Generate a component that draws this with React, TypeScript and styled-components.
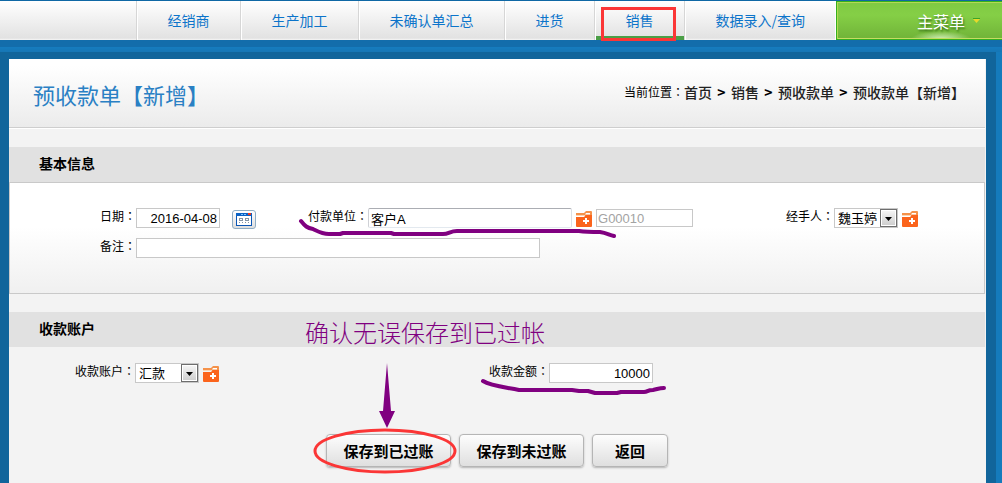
import React from "react";
import styled, { createGlobalStyle, css } from "styled-components";

const cjk = `"Noto Sans CJK SC", sans-serif`;

const GlobalStyle = createGlobalStyle`
  * { box-sizing: border-box; }
  body {
    margin: 0;
    background: #157bbc;
    color: #000;
    font-family: ${cjk};
    font-size: 12px;
  }
`;

const Page = styled.div`
  display: flex;
  flex-direction: column;
  min-height: 100vh;
`;

const TopBar = styled.nav`
  display: flex;
  height: 40px;
  border-top: 1px solid #0f68a5;
  background: linear-gradient(#ffffff, #e2e2e2 95%, #f6f6f6);
`;

const TopSpacer = styled.div`
  flex: 1;
  border-right: 1px solid #d6d6d6;
`;

const NavItem = styled.a<{ $active?: boolean; $last?: boolean }>`
  position: relative;
  padding: 0 30px;
  border-left: 1px solid #fff;
  border-right: ${(p) => (p.$last ? "1px solid #fff" : "1px solid #d6d6d6")};
  line-height: 38px;
  font-size: 14px;
  color: #0c74ca;
  text-decoration: none;
  white-space: nowrap;
  box-shadow: ${(p) => (p.$active ? "inset 0 -4px #4b9f47" : "none")};
`;

const RedFrame = styled.span`
  position: absolute;
  top: 6px;
  left: 5px;
  width: 75px;
  height: 34px;
  border: 3px solid #fb3636;
`;

const MainMenu = styled.button`
  display: flex;
  align-items: center;
  justify-content: center;
  gap: 8px;
  width: 166px;
  padding: 0 0 0 58px;
  border: 1px solid #35b01e;
  border-right: 0;
  box-shadow: inset 1px 1px #b5d953, inset 0 -1px #c6dc62;
  background:
    radial-gradient(ellipse 30px 8px at 104px 100%, #d3efb9, transparent),
    linear-gradient(#7fc943, #85cf46 35%, #70b338);
  color: #fff;
  font-family: ${cjk};
  font-size: 16px;
  text-shadow: 1px 2px 2px #3c761d;
`;

const Stripe = styled.div`
  height: 12px;
  background: linear-gradient(#136dab 7px, #167dbf 7px, #1676b5);
`;

const Frame = styled.div`
  display: flex;
  flex: 1;
  margin-right: 6px;
  padding: 7px 10px 0 9px;
  background: #11659b;
`;

const Panel = styled.main`
  flex: 1;
  min-width: 0;
  padding-right: 1px;
  background: #f3f3f3;
`;

const PanelHeader = styled.header`
  display: flex;
  align-items: center;
  justify-content: space-between;
  height: 69px;
  margin-bottom: 19px;
  padding: 0 20px 0 24px;
  border-bottom: 1px solid #cecece;
  box-shadow: 0 1px #fff;
  background: linear-gradient(#ffffff 10%, #ebebeb);
`;

const Title = styled.h1`
  margin: 0;
  padding-top: 2px;
  font-size: 22px;
  line-height: 32px;
  font-weight: 400;
  color: #2a80c4;
`;

const Crumbs = styled.div`
  display: flex;
  align-items: center;
  padding-bottom: 2px;
  font-size: 12px;
  line-height: 20px;
`;

const Crumb = styled.a`
  font-size: 14px;
  font-weight: 500;
  color: #222;
  text-decoration: none;
`;

const CrumbMark = styled.span`
  width: 19px;
  text-align: center;
  font-size: 14px;
  font-weight: 700;
`;

const Section = styled.section`
  margin-top: 18px;
`;

const SectionTitle = styled.h2`
  margin: 0;
  padding: 0 0 2px 30px;
  background: #e1e1e1;
  font-size: 14px;
  line-height: 33px;
  font-weight: 700;
`;

const FormBox = styled.div`
  display: flex;
  flex-direction: column;
  gap: 10px;
  padding: 25px 62px 35px 0;
  border: 1px solid #c9c9c9;
  background: linear-gradient(#ffffff 40%, #f0f0f0);
`;

const Row = styled.div<{ $columns?: string }>`
  display: grid;
  grid-template-columns: ${(p) => p.$columns ?? "1fr"};
`;

const AccountRow = styled(Row)`
  padding-top: 16px;
`;

const Field = styled.div`
  position: relative;
  display: flex;
  align-items: center;
  height: 20px;
`;

const Label = styled.label<{ $lead?: boolean }>`
  align-self: flex-start;
  width: ${(p) => (p.$lead ? "126px" : "auto")};
  text-align: right;
  line-height: 16px;
  white-space: nowrap;
`;

const Colon = styled.span`
  font-family: "Noto Sans CJK TC", sans-serif;
`;

const TextInput = styled.input<{ $width: number; $right?: boolean; $code?: boolean }>`
  width: ${(p) => p.$width}px;
  height: ${(p) => (p.$code ? 18 : 20)}px;
  padding: ${(p) => (p.$code ? "0 1px" : "0 2px")};
  border: 1px solid #c8c8c8;
  background: #fff;
  font-family: "Liberation Sans", ${cjk};
  font-size: 13px;
  text-align: ${(p) => (p.$right ? "right" : "left")};
  color: #000;
  ${(p) => p.$code && css`color: #a3a3a3;`}
`;

const PayerInput = styled(TextInput)`
  border-color: #abadb3 #dbdfe6 #e3e9ef #cfd1d6;
  border-radius: 2px;
`;

const CalendarButton = styled.button`
  display: flex;
  align-items: center;
  justify-content: center;
  width: 24px;
  height: 19px;
  margin: 3px 0 0 12px;
  padding: 0;
  border: 1px solid #8fadc4;
  border-radius: 3px;
  background: linear-gradient(#ffffff, #dedede);
`;

const IconButton = styled.button`
  display: block;
  width: 16px;
  height: 18px;
  margin: 0 4px;
  padding: 0;
  border: 0;
  background: none;
`;

const SelectWrap = styled.span`
  position: relative;
  display: block;
  width: 64px;
  height: 20px;
`;

const Select = styled.select`
  appearance: none;
  display: block;
  width: 100%;
  height: 20px;
  padding: 0 0 0 3px;
  border: 1px solid #c8c8c8;
  border-radius: 0;
  background: #fff;
  color: #000;
  font-family: ${cjk};
  font-size: 13px;
  line-height: 18px;
`;

const SelectArrow = styled.svg`
  position: absolute;
  top: 1px;
  right: 1px;
  pointer-events: none;
`;

const Actions = styled.div`
  display: flex;
  justify-content: center;
  gap: 8px;
  margin: 51px 0 16px;
`;

const ActionButton = styled.button<{ $short?: boolean }>`
  width: ${(p) => (p.$short ? 76 : 125)}px;
  height: 33px;
  padding: 0;
  border: 1px solid #b5b5b5;
  border-radius: 4px;
  box-shadow: 0 1px 2px #b5b5b5;
  background: linear-gradient(#fdfdfd, #dfdfdf);
  color: #000;
  font-family: ${cjk};
  font-size: 15px;
  font-weight: 700;
  white-space: nowrap;
`;

const ActionSlot = styled.div`
  position: relative;
  display: flex;
`;

const Mark = styled.svg<{ $top: number; $left: number }>`
  position: absolute;
  top: ${(p) => p.$top}px;
  left: ${(p) => p.$left}px;
  z-index: 1;
  overflow: visible;
  pointer-events: none;
`;

const Note = styled.div`
  position: absolute;
  top: -116px;
  left: -21px;
  z-index: 1;
  color: #800080;
  font-size: 24px;
  line-height: 28px;
  font-weight: 300;
  white-space: nowrap;
`;

const FieldLabel = ({ id, text, lead }: { id: string; text: string; lead?: boolean }) => (
  <Label htmlFor={id} $lead={lead}>
    {text}
    <Colon>：</Colon>
  </Label>
);

const AddFolder = ({ label }: { label: string }) => (
  <IconButton type="button" aria-label={label}>
    <svg width="16" height="18" viewBox="0 0 16 18">
      <path d="M0 4h8l2-2h5q1 0 1 1v4H0z" fill="#f5924a" />
      <path d="M10 4h4v1.500H9z" fill="#fff" />
      <path d="M0 6h9v1H0z" fill="#fbd5b5" />
      <path d="M0 8h8l2-2h6v11q0 1-1 1H1q-1 0-1-1z" fill="#fb641c" />
      <path d="M9 9h2v2h2v2h-2v2H9v-2H7v-2h2z" fill="#fff" />
    </svg>
  </IconButton>
);

const DropDown = ({ id, value }: { id: string; value: string }) => (
  <SelectWrap>
    <Select id={id} defaultValue={value}>
      <option>{value}</option>
    </Select>
    <SelectArrow width="17" height="18" viewBox="0 0 17 18">
      <defs>
        <linearGradient id={`${id}-face`} x1="0" y1="0" x2="0" y2="1">
          <stop offset="0" stopColor="#f4f4f4" />
          <stop offset="1" stopColor="#cfcfcf" />
        </linearGradient>
      </defs>
      <rect x=".5" y=".5" width="16" height="17" fill="#fff" stroke="#6e6e6e" />
      <rect x="2" y="2" width="13" height="14" fill={`url(#${id}-face)`} />
      <path d="M5 8h7l-3.500 4z" fill="#000" />
    </SelectArrow>
  </SelectWrap>
);

export default function App() {
  return (
    <Page>
      <GlobalStyle />
      <TopBar>
        <TopSpacer />
        <NavItem href="#">经销商</NavItem>
        <NavItem href="#">生产加工</NavItem>
        <NavItem href="#">未确认单汇总</NavItem>
        <NavItem href="#">进货</NavItem>
        <NavItem href="#" $active>
          销售
          <RedFrame />
        </NavItem>
        <NavItem href="#" $last>数据录入/查询</NavItem>
        <MainMenu type="button">
          主菜单
          <svg width="7" height="5" viewBox="0 0 7 5">
            <path d="M0 0h7v1H0z" fill="#3aa52a" />
            <path d="M0 1h7L3.500 5z" fill="#e9d82a" />
          </svg>
        </MainMenu>
      </TopBar>
      <Stripe />
      <Frame>
        <Panel>
          <PanelHeader>
            <Title>预收款单【新增】</Title>
            <Crumbs>
              <span>当前位置<Colon>：</Colon></span>
              <Crumb href="#">首页</Crumb>
              <CrumbMark>&gt;</CrumbMark>
              <Crumb href="#">销售</Crumb>
              <CrumbMark>&gt;</CrumbMark>
              <Crumb href="#">预收款单</Crumb>
              <CrumbMark>&gt;</CrumbMark>
              <Crumb href="#">预收款单【新增】</Crumb>
            </Crumbs>
          </PanelHeader>

          <Section>
            <SectionTitle>基本信息</SectionTitle>
            <FormBox>
              <Row $columns="298px 1fr auto">
                <Field>
                  <FieldLabel id="date" text="日期" lead />
                  <TextInput id="date" $width={84} $right defaultValue="2016-04-08" />
                  <CalendarButton type="button" aria-label="日期">
                    <svg width="16" height="13" viewBox="0 0 16 13">
                      <rect x=".5" y=".5" width="15" height="12" fill="#fff" stroke="#0a56b5" />
                      <path d="M0 0h16v3H0z" fill="#0b62c4" />
                      <path d="M5 1h2v1H5zM8 1h2v1H8z" fill="#7cc4ff" />
                      <path d="M12 0h3v2h-3z" fill="#f03a1e" />
                      <path d="M3 5h4v1H3zM9 5h4v1H9zM3 7h4v1H3zM9 7h4v1H9zM3 9h1v1H3zM6 9h1v1H6zM9 9h1v1H9zM12 9h1v1h-1zM3 6h1v1H3zM6 6h1v1H6zM9 6h1v1H9zM12 6h1v1h-1z" fill="#8494a5" />
                    </svg>
                  </CalendarButton>
                </Field>
                <Field>
                  <FieldLabel id="payer" text="付款单位" />
                  <PayerInput id="payer" $width={204} defaultValue="客户A" />
                  <AddFolder label="付款单位" />
                  <TextInput aria-label="付款单位" $width={97} $code defaultValue="G00010" readOnly />
                  <Mark $top={13} $left={-9} width="318" height="18">
                    <path
                      d="M2 0 C6 5 8 7 14 8 C20 11 23 13 30 13 H41 L44 12 H92 L95 13 H144 C150 13 151 10 158 10 H280 C287 11 294 11 301 11 C308 12 310 14 315 15"
                      fill="none" stroke="#800080" strokeWidth="4" strokeLinecap="round" strokeLinejoin="round"
                    />
                  </Mark>
                </Field>
                <Field>
                  <FieldLabel id="handler" text="经手人" />
                  <DropDown id="handler" value="魏玉婷" />
                  <AddFolder label="经手人" />
                </Field>
              </Row>
              <Row>
                <Field>
                  <FieldLabel id="remark" text="备注" lead />
                  <TextInput id="remark" $width={404} />
                </Field>
              </Row>
            </FormBox>
          </Section>

          <Section>
            <SectionTitle>收款账户</SectionTitle>
            <AccountRow $columns="480px 1fr">
              <Field>
                <FieldLabel id="account" text="收款账户" lead />
                <DropDown id="account" value="汇款" />
                <AddFolder label="收款账户" />
              </Field>
              <Field>
                <FieldLabel id="amount" text="收款金额" />
                <TextInput id="amount" $width={104} $right defaultValue="10000" />
                <Mark $top={17} $left={-8} width="186" height="16">
                  <path
                    d="M2 1 C10 6 23 7 38 10 H91 L98 11 L107 11 L114 13 H136 L140 12 H163 C167 12 166 10 172 10 C177 9 178 8 183 8"
                    fill="none" stroke="#800080" strokeWidth="4" strokeLinecap="round" strokeLinejoin="round"
                  />
                </Mark>
              </Field>
            </AccountRow>
          </Section>

          <Actions>
            <ActionSlot>
              <ActionButton type="button">保存到已过账</ActionButton>
              <Note>确认无误保存到已过帐</Note>
              <Mark $top={-71} $left={53} width="16" height="65">
                <path d="M8 0L12 48H16L8 65L0 48H4z" fill="#800080" />
              </Mark>
              <Mark $top={-6} $left={-13} width="144" height="46">
                <ellipse cx="72" cy="23" rx="70" ry="21" fill="none" stroke="#fb3636" strokeWidth="3" />
              </Mark>
            </ActionSlot>
            <ActionButton type="button">保存到未过账</ActionButton>
            <ActionButton type="button" $short>返回</ActionButton>
          </Actions>
        </Panel>
      </Frame>
    </Page>
  );
}
